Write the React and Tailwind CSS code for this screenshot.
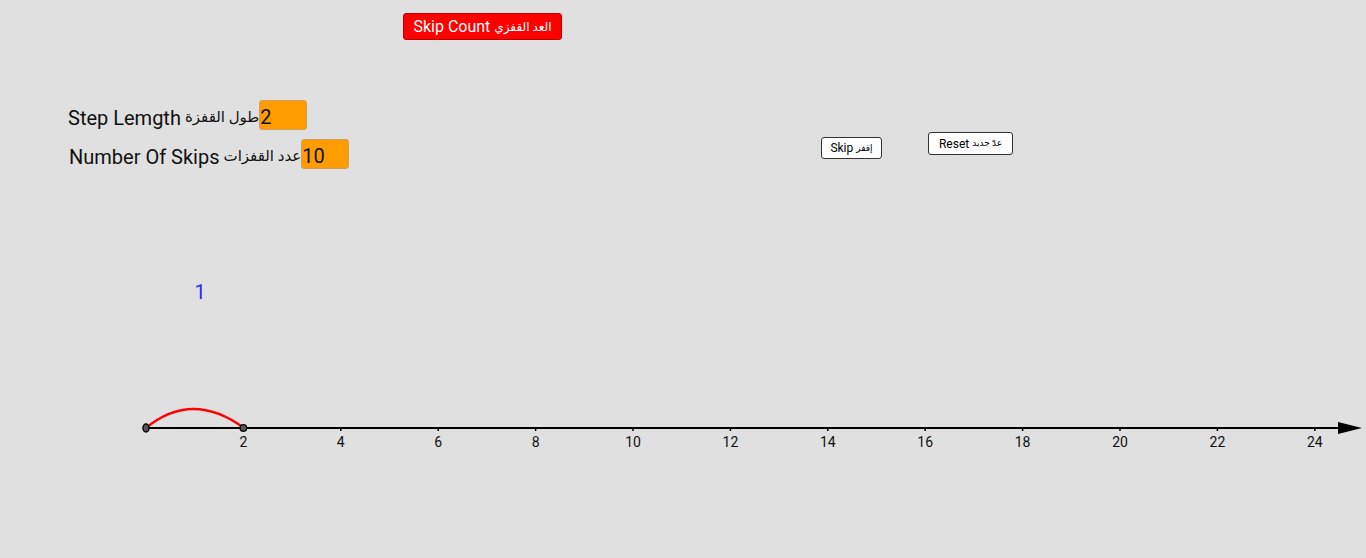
import React from 'react';

const unit = 48.7;
const originX = 146;
const axisY = 428;

export default function App() {
  const ticks = [];
  for (let n = 2; n <= 24; n += 2) ticks.push(n);

  return (
    <div className="w-[1366px] h-[558px] bg-[#e0e0e0] font-['Roboto','DejaVu_Sans',sans-serif] overflow-hidden">
      {/* Title */}
      <div className="pt-[13px] pl-[403px] h-[40px]">
        <button className="w-[159px] h-[27px] bg-[#ff0000] border border-[#c00000] rounded-[3px] text-white text-[16px] leading-none flex items-center justify-center gap-[4px] whitespace-nowrap">
          <span>Skip Count</span>
          <span className="text-[12px]">العد القفزي</span>
        </button>
      </div>

      {/* Inputs and buttons */}
      <div className="flex items-start h-[129px]">
        <div className="w-[821px] pl-[68px] pt-[60px] flex flex-col gap-[9px]">
          <div className="flex items-center h-[30px] whitespace-nowrap">
            <span className="text-[20px] text-[#111] pt-[5px]">Step Lemgth</span>
            <span className="text-[15px] text-[#111] ml-[4px] pt-[5px]">طول القفزة</span>
            <div className="w-[48px] h-[30px] bg-[#ff9c00] border border-[#d0a060] rounded-[3px] text-[20px] text-[#111] leading-[32px]">
              2
            </div>
          </div>
          <div className="flex items-center h-[30px] whitespace-nowrap">
            <span className="text-[20px] text-[#111] pl-[1px] pt-[5px]">Number Of Skips</span>
            <span className="text-[15px] text-[#111] ml-[4px] pt-[5px]">عدد القفزات</span>
            <div className="w-[48px] h-[30px] bg-[#ff9c00] border border-[#d0a060] rounded-[3px] text-[20px] text-[#111] leading-[32px]">
              10
            </div>
          </div>
        </div>
        <button className="mt-[97px] w-[61px] h-[22px] bg-white border border-[#333] rounded-[3px] text-[12px] text-black leading-none flex items-center justify-center gap-[3px] whitespace-nowrap">
          <span>Skip</span>
          <span className="text-[9px]">إقفز</span>
        </button>
        <button className="ml-[46px] mt-[92px] w-[85px] h-[23px] bg-white border border-[#333] rounded-[3px] text-[12px] text-black leading-none flex items-center justify-center gap-[3px] whitespace-nowrap">
          <span>Reset</span>
          <span className="text-[9px]">عدّ جديد</span>
        </button>
      </div>

      {/* Number line */}
      <svg width="1366" height="389" viewBox="0 169 1366 389" className="block">
        <text x="200" y="299" textAnchor="middle" fontSize="20" fill="#2a2aff" fontFamily="Roboto, sans-serif">
          1
        </text>
        <line x1={originX} y1={axisY} x2="1342" y2={axisY} stroke="#000" strokeWidth="2" />
        <polygon points="1338,422 1362,428 1338,434" fill="#000" />
        {ticks.map((n) => {
          const x = originX + n * unit;
          return (
            <g key={n}>
              <line x1={x} y1={axisY} x2={x} y2={axisY + 3} stroke="#000" strokeWidth="1.5" />
              <text x={x} y="447" textAnchor="middle" fontSize="14" fill="#111" fontFamily="Roboto, sans-serif">
                {n}
              </text>
            </g>
          );
        })}
        <path d="M146 428 Q 192 390 244 428" fill="none" stroke="#ff0000" strokeWidth="2.2" />
        <ellipse cx="146" cy="428" rx="3" ry="4" fill="#555" stroke="#000" strokeWidth="1.5" />
        <circle cx={originX + 2 * unit} cy="428" r="3.3" fill="#555" stroke="#000" strokeWidth="1.2" />
      </svg>
    </div>
  );
}
